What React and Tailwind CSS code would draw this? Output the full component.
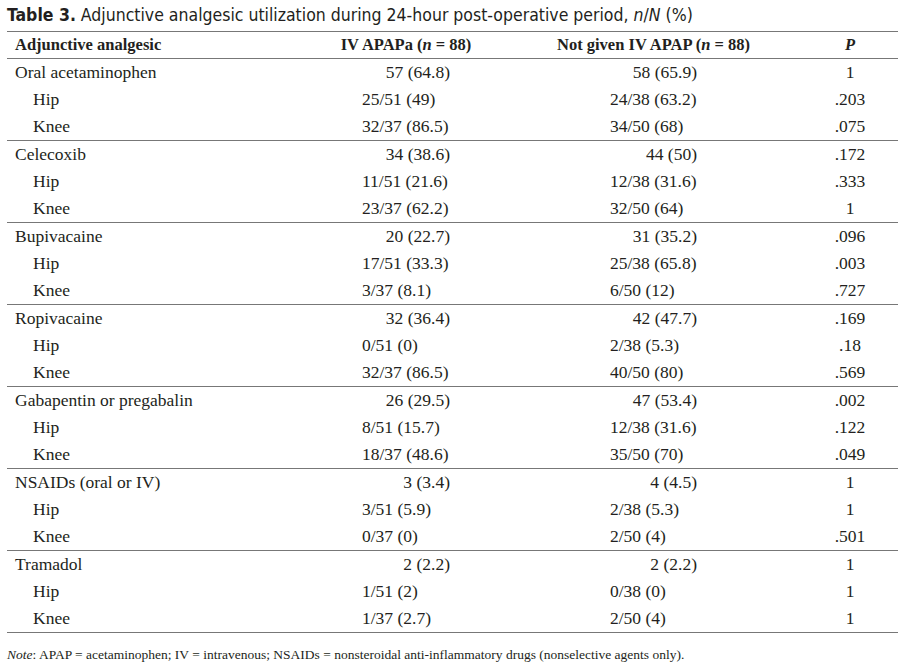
import React from 'react';

const groups = [
  ['Oral acetaminophen', '57 (64.8)', '58 (65.9)', '1', [['Hip', '25/51 (49)', '24/38 (63.2)', '.203'], ['Knee', '32/37 (86.5)', '34/50 (68)', '.075']]],
  ['Celecoxib', '34 (38.6)', '44 (50)', '.172', [['Hip', '11/51 (21.6)', '12/38 (31.6)', '.333'], ['Knee', '23/37 (62.2)', '32/50 (64)', '1']]],
  ['Bupivacaine', '20 (22.7)', '31 (35.2)', '.096', [['Hip', '17/51 (33.3)', '25/38 (65.8)', '.003'], ['Knee', '3/37 (8.1)', '6/50 (12)', '.727']]],
  ['Ropivacaine', '32 (36.4)', '42 (47.7)', '.169', [['Hip', '0/51 (0)', '2/38 (5.3)', '.18'], ['Knee', '32/37 (86.5)', '40/50 (80)', '.569']]],
  ['Gabapentin or pregabalin', '26 (29.5)', '47 (53.4)', '.002', [['Hip', '8/51 (15.7)', '12/38 (31.6)', '.122'], ['Knee', '18/37 (48.6)', '35/50 (70)', '.049']]],
  ['NSAIDs (oral or IV)', '3 (3.4)', '4 (4.5)', '1', [['Hip', '3/51 (5.9)', '2/38 (5.3)', '1'], ['Knee', '0/37 (0)', '2/50 (4)', '.501']]],
  ['Tramadol', '2 (2.2)', '2 (2.2)', '1', [['Hip', '1/51 (2)', '0/38 (0)', '1'], ['Knee', '1/37 (2.7)', '2/50 (4)', '1']]],
];

const grid = 'grid grid-cols-[355px_88px_160px_87px_105px_96px] items-center h-[27px]';

const Row = ({ label, a, b, p, sub }) => (
  <div className={grid}>
    <div className={sub ? 'pl-[26px]' : 'pl-[8px]'}>{label}</div>
    <div className={`whitespace-nowrap ${sub ? 'text-left' : 'text-right'}`}>{a}</div>
    <div />
    <div className={`whitespace-nowrap ${sub ? 'text-left' : 'text-right'}`}>{b}</div>
    <div />
    <div className="text-center">{p}</div>
  </div>
);

export default function App() {
  return (
    <div className="w-[900px] h-[671px] bg-white text-[#231f20] pl-[7px] pt-[3px]">
      <div className="text-[17.5px] leading-[24px] font-['Liberation_Sans_Narrow','DejaVu_Sans_Condensed',sans-serif] [font-stretch:condensed] whitespace-nowrap">
        <span className="font-bold">Table 3.</span> Adjunctive analgesic utilization during 24-hour post-operative period, <i>n</i>/<i>N</i> (%)
      </div>
      <div className="mt-[4px] w-[891px] font-['Liberation_Serif',serif] text-[17.5px]">
        <div className="border-t-[1.5px] border-b-[1.5px] border-[#777]">
          <div className="grid grid-cols-[355px_88px_160px_87px_105px_96px] items-center h-[26px] font-semibold text-[16.5px]">
            <div className="pl-[8px]">Adjunctive analgesic</div>
            <div className="flex justify-center whitespace-nowrap">IV APAPa (<i>n</i>&nbsp;=&nbsp;88)</div>
            <div />
            <div className="flex justify-center whitespace-nowrap">Not given IV APAP (<i>n</i>&nbsp;=&nbsp;88)</div>
            <div />
            <div className="text-center"><i>P</i></div>
          </div>
        </div>
        {groups.map(([label, a, b, p, subs]) => (
          <div key={label} className="border-b-[1.5px] border-[#777]">
            <Row label={label} a={a} b={b} p={p} />
            {subs.map(([l, x, y, q]) => (
              <Row key={l} label={l} a={x} b={y} p={q} sub />
            ))}
          </div>
        ))}
      </div>
      <div className="mt-[12px] text-[13.5px] font-['Liberation_Serif',serif] whitespace-nowrap">
        <i>Note</i>: APAP = acetaminophen; IV = intravenous; NSAIDs = nonsteroidal anti-inflammatory drugs (nonselective agents only).
      </div>
    </div>
  );
}
